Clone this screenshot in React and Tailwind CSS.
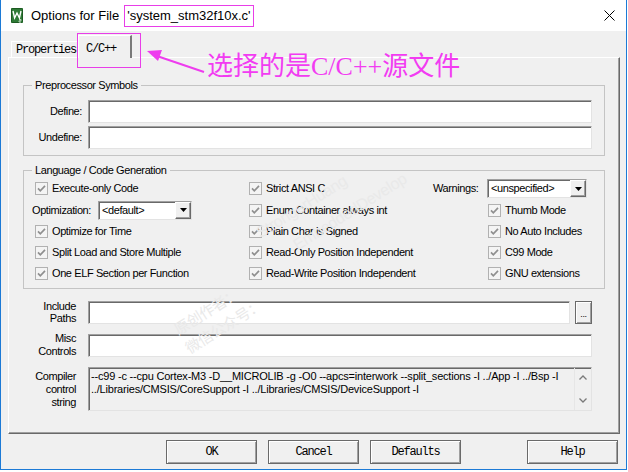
import React from "react";

const ui = "font-['Liberation_Sans',Arial,sans-serif]";
const mono = "font-['Liberation_Mono','Courier_New',monospace]";
const sunken =
  "border border-t-[#a0a0a0] border-l-[#a0a0a0] border-b-[#e3e3e3] border-r-[#e3e3e3] shadow-[inset_1px_1px_0_#696969]";
const raised =
  "border border-t-white border-l-white border-b-[#696969] border-r-[#696969] shadow-[inset_-1px_-1px_0_#a0a0a0]";

function Check({ label }) {
  return (
    <div className="flex items-center gap-[4px] whitespace-nowrap">
      <svg width="13" height="13" viewBox="0 0 13 13" className="shrink-0">
        <rect x="0.5" y="0.5" width="12" height="12" fill="#f4f4f4" stroke="#b1b1b1" />
        <polyline points="3,6.4 5.3,8.8 10,3.8" fill="none" stroke="#8f8f8f" strokeWidth="1.7" />
      </svg>
      <span>{label}</span>
    </div>
  );
}

function Select({ value, width }) {
  return (
    <div className={`${width} h-[19px] flex bg-white ${sunken}`}>
      <span className="flex-1 pl-[3px] leading-[17px] whitespace-nowrap">{value}</span>
      <div className={`w-[16px] h-full bg-[#f0f0f0] ${raised} flex items-center justify-center`}>
        <svg width="7" height="4" viewBox="0 0 7 4">
          <polygon points="0,0 7,0 3.5,4" fill="#000" />
        </svg>
      </div>
    </div>
  );
}

function Btn({ children }) {
  return (
    <div
      className={`h-[24px] w-[91px] flex items-center justify-center bg-[#f0f0f0] border border-[#6a6a6a] shadow-[inset_1px_1px_0_#fff,inset_-1px_-1px_0_#a0a0a0] ${mono} text-[12px] tracking-[-1.2px]`}
    >
      {children}
    </div>
  );
}

export default function App() {
  return (
    <div className={`relative w-[628px] h-[472px] bg-white overflow-hidden text-[11px] tracking-[-0.4px] text-black ${ui}`}>
      <div className="w-[627px] h-[470px] border border-t-0 border-[#1c7ad6] flex flex-col bg-[#f0f0f0]">
        {/* title bar */}
        <div className="h-[31px] bg-white flex items-center pl-[10px] pr-[10px] shrink-0">
          <svg width="12" height="15" viewBox="0 0 12 15" className="shrink-0">
            <rect x="0" y="0" width="12" height="15" rx="1" fill="#2f7a36" />
            <rect x="0.5" y="0.5" width="11" height="14" rx="1" fill="none" stroke="#1d5a22" />
            <polyline points="2,3 3.6,10 6,5 8.4,10 10,3" fill="none" stroke="#fff" strokeWidth="1.4" />
            <path d="M8 11.5 h2 v1.3 h-2 v1.3 h2" fill="none" stroke="#d8ead9" strokeWidth="0.8" />
          </svg>
          <span className="ml-[8px] text-[13px] tracking-normal leading-none">Options for File</span>
          <span className="ml-[5px] h-[22px] px-[2px] border border-[#e83ee8] flex items-center text-[13px] tracking-normal">
            'system_stm32f10x.c'
          </span>
          <svg width="11" height="11" viewBox="0 0 11 11" className="ml-auto mr-[1px]">
            <path d="M0.5 0.5 L10.5 10.5 M10.5 0.5 L0.5 10.5" stroke="#000" strokeWidth="1" />
          </svg>
        </div>

        {/* body */}
        <div className="flex-1 pl-[7px] flex flex-col">
          {/* tabs */}
          <div className={`h-[26px] flex items-end pl-[3px] ${mono} text-[12px] tracking-[-1.2px]`}>
            <div className="h-[16px] w-[67px] border border-b-0 border-t-white border-l-white border-r-[#a0a0a0] flex items-center pl-[4px]">
              Properties
            </div>
            <div className="relative z-10 -mb-px h-[23px] w-[54px] bg-[#f0f0f0] border-t border-l border-r-2 border-t-white border-l-white border-r-[#7a7a7a] flex items-start pt-[4px] pl-[7px]">
              C/C++
            </div>
          </div>

          {/* panel */}
          <div className={`w-[612px] h-[377px] ${raised} flex flex-col`}>
            <fieldset className="mt-[20px] mx-[14px] border border-[#c4c4c4]">
              <legend className="ml-[8px] px-[3px] leading-[14px]">Preprocessor Symbols</legend>
              <div className="pt-[8px] pb-[6px] pr-[12px] flex flex-col gap-[3px]">
                <div className="flex items-center gap-[6px]">
                  <span className="w-[58px] text-right">Define:</span>
                  <div className={`flex-1 h-[23px] bg-white ${sunken}`} />
                </div>
                <div className="flex items-center gap-[6px]">
                  <span className="w-[58px] text-right">Undefine:</span>
                  <div className={`flex-1 h-[23px] bg-white ${sunken}`} />
                </div>
              </div>
            </fieldset>

            <fieldset className="mt-[7px] mx-[14px] border border-[#c4c4c4]">
              <legend className="ml-[8px] px-[3px] leading-[14px]">Language / Code Generation</legend>
              <div className="pt-[1px] pb-[4px] pl-[8px] grid grid-cols-[217px_184px_1fr] grid-rows-[21px_22px_21px_21px_21px] items-center">
                <div className="pl-[3px]"><Check label="Execute-only Code" /></div>
                <Check label="Strict ANSI C" />
                <div className="flex items-center">
                  <span className="w-[49px] whitespace-nowrap">Warnings:</span>
                  <div className="ml-[5px]"><Select value="<unspecified>" width="w-[100px]" /></div>
                </div>

                <div className="flex items-center">
                  <span className="w-[66px] whitespace-nowrap">Optimization:</span>
                  <Select value="<default>" width="w-[94px]" />
                </div>
                <Check label="Enum Container always int" />
                <div className="pl-[55px]"><Check label="Thumb Mode" /></div>

                <div className="pl-[3px]"><Check label="Optimize for Time" /></div>
                <Check label="Plain Char is Signed" />
                <div className="pl-[55px]"><Check label="No Auto Includes" /></div>

                <div className="pl-[3px]"><Check label="Split Load and Store Multiple" /></div>
                <Check label="Read-Only Position Independent" />
                <div className="pl-[55px]"><Check label="C99 Mode" /></div>

                <div className="pl-[3px]"><Check label="One ELF Section per Function" /></div>
                <Check label="Read-Write Position Independent" />
                <div className="pl-[55px]"><Check label="GNU extensions" /></div>
              </div>
            </fieldset>

            <div className="mt-[11px] flex items-center gap-[12px] pr-[27px]">
              <span className="w-[67px] text-right leading-[12px]">Include<br />Paths</span>
              <div className={`flex-1 h-[23px] bg-white ${sunken}`} />
              <div className="-ml-[7px] w-[17px] h-[23px] bg-[#f0f0f0] border border-[#6a6a6a] shadow-[inset_1px_1px_0_#fff,inset_-1px_-1px_0_#a0a0a0] flex items-end justify-center pb-[4px] text-[9px] leading-none">
                ...
              </div>
            </div>

            <div className="mt-[8px] flex items-center gap-[12px] pr-[27px]">
              <span className="w-[67px] text-right leading-[13px]">Misc<br />Controls</span>
              <div className={`flex-1 h-[23px] bg-white ${sunken}`} />
            </div>

            <div className="mt-[9px] flex items-start gap-[12px] pr-[27px]">
              <span className="w-[67px] text-right leading-[13px] pt-[3px]">Compiler<br />control<br />string</span>
              <div className={`flex-1 h-[44px] bg-[#f0f0f0] ${sunken} flex`}>
                <div className="flex-1 pl-[2px] pt-[2px] leading-[13px] text-[11px] tracking-[-0.2px] whitespace-nowrap">
                  --c99 -c --cpu Cortex-M3 -D__MICROLIB -g -O0 --apcs=interwork --split_sections -I ../App -I ../Bsp -I
                  <br />
                  ../Libraries/CMSIS/CoreSupport -I ../Libraries/CMSIS/DeviceSupport -I
                </div>
                <div className="w-[17px] border-l border-[#e6e6e6] flex flex-col items-center justify-between py-[7px]">
                  <svg width="8" height="5" viewBox="0 0 8 5">
                    <polyline points="0.5,4.5 4,1 7.5,4.5" fill="none" stroke="#7a7a7a" strokeWidth="1.3" />
                  </svg>
                  <svg width="8" height="5" viewBox="0 0 8 5">
                    <polyline points="0.5,0.5 4,4 7.5,0.5" fill="none" stroke="#7a7a7a" strokeWidth="1.3" />
                  </svg>
                </div>
              </div>
            </div>
          </div>

          {/* buttons */}
          <div className="mt-[6px] flex pl-[158px]">
            <Btn>OK</Btn>
            <div className="ml-[11px]"><Btn>Cancel</Btn></div>
            <div className="ml-[11px]"><Btn>Defaults</Btn></div>
            <div className="ml-[66px]"><Btn>Help</Btn></div>
          </div>
        </div>
      </div>

      {/* watermark */}
      <div className="absolute left-[250px] top-[195px] -rotate-[32deg] text-[16px] text-[#e9e9e9] whitespace-nowrap pointer-events-none">
        StrongerHuang
      </div>
      <div className="absolute left-[285px] top-[200px] -rotate-[32deg] text-[16px] text-[#e9e9e9] whitespace-nowrap pointer-events-none">
        EmbeddedDevelop
      </div>
      <div className="absolute left-[170px] top-[300px] -rotate-[32deg] text-[15px] text-[#e9e9e9] whitespace-nowrap pointer-events-none font-['Noto_Sans_CJK_SC',sans-serif]">
        原创作者：
      </div>
      <div className="absolute left-[180px] top-[315px] -rotate-[32deg] text-[15px] text-[#e9e9e9] whitespace-nowrap pointer-events-none font-['Noto_Sans_CJK_SC',sans-serif]">
        微信公众号：
      </div>

      {/* annotation */}
      <div className="absolute left-[77px] top-[33px] w-[64px] h-[35px] border border-[#e83ee8] pointer-events-none" />
      <svg className="absolute left-[140px] top-[40px] pointer-events-none" width="70" height="40" viewBox="0 0 70 40">
        <line x1="14" y1="15" x2="64" y2="32" stroke="#ee3cee" strokeWidth="2" />
        <polygon points="7,11 22,10 18,21" fill="#ee3cee" />
      </svg>
      <div className="absolute left-[207px] top-[52px] text-[26px] leading-[30px] tracking-normal text-[#f23cf2] whitespace-nowrap font-['Liberation_Serif','Noto_Sans_CJK_SC',serif]">
        选择的是C/C++源文件
      </div>
    </div>
  );
}
